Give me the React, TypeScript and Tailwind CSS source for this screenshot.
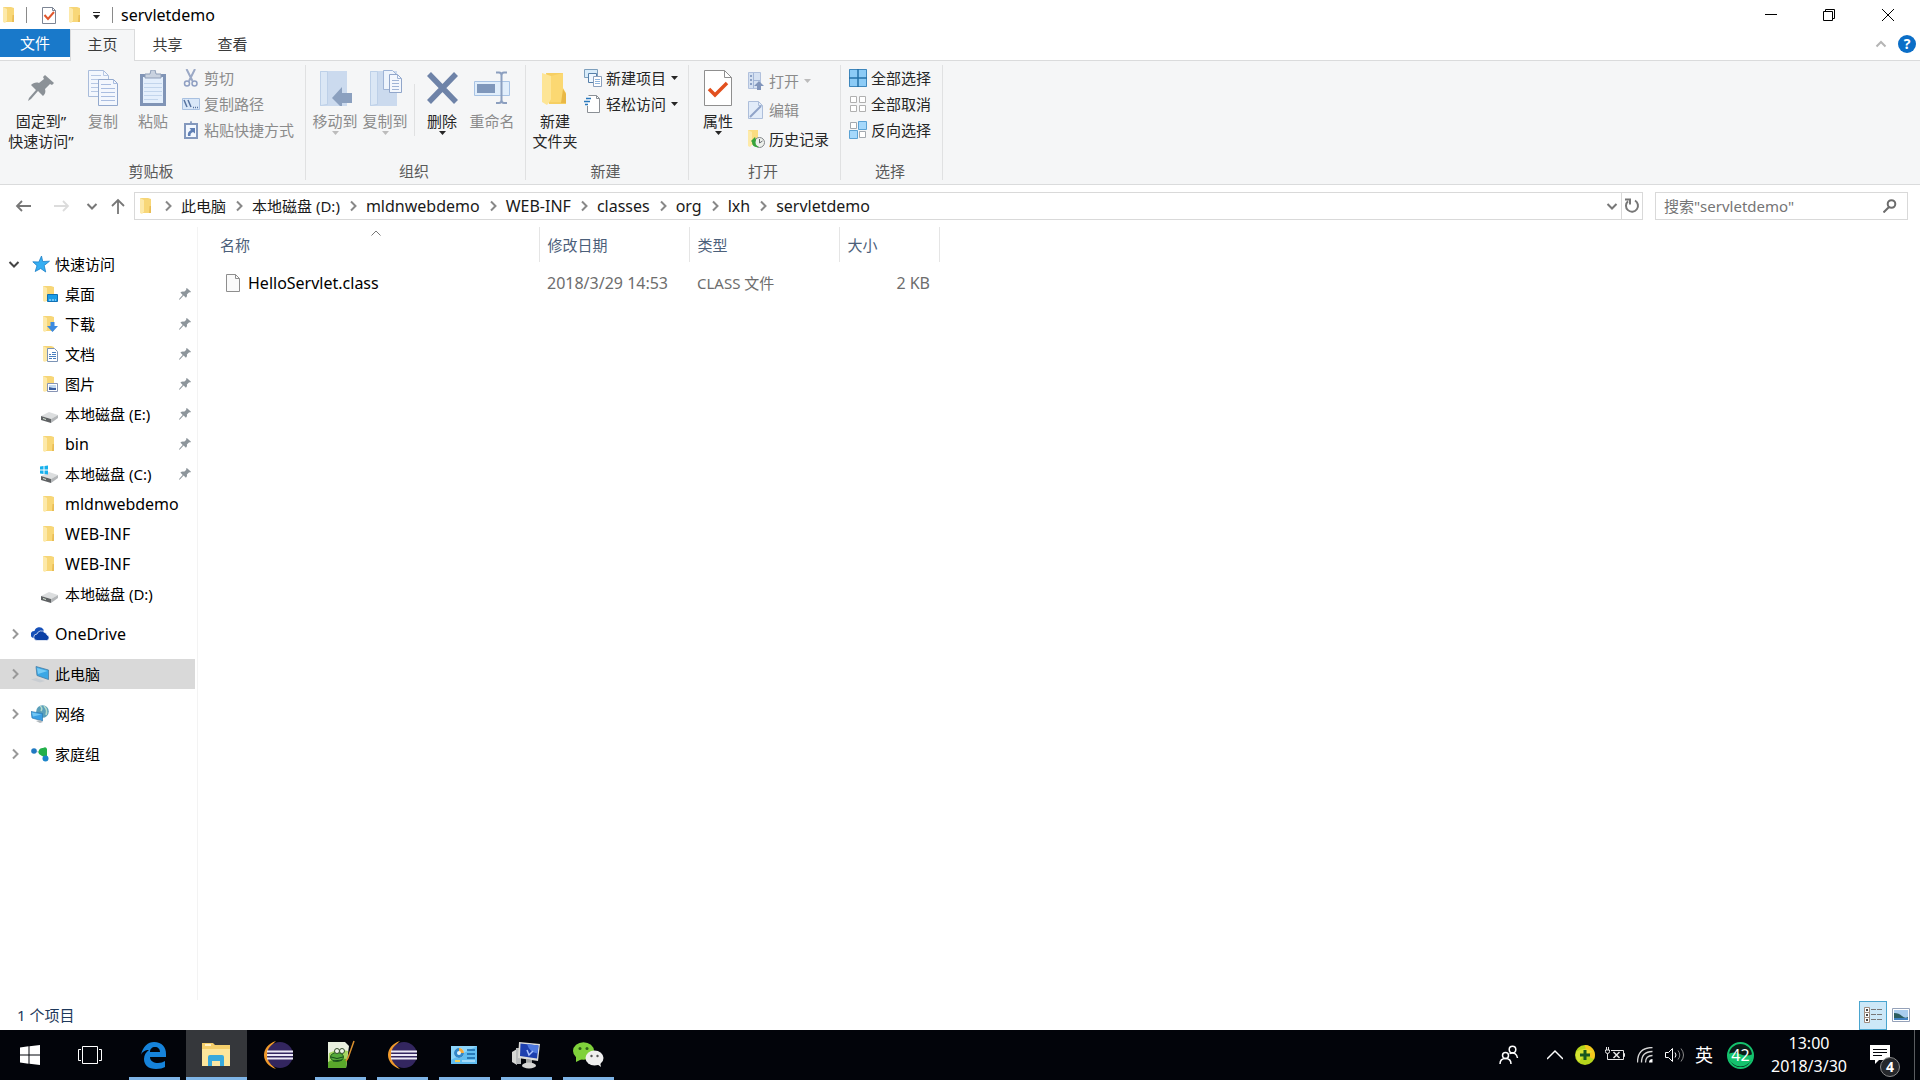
import { useState } from "react"
import type { ReactNode } from "react"
import { clsx } from "clsx"

const quickAccess = [
  { name: "桌面", icon: "desktop", pinned: true },
  { name: "下载", icon: "download", pinned: true },
  { name: "文档", icon: "document", pinned: true },
  { name: "图片", icon: "picture", pinned: true },
  { name: "本地磁盘 (E:)", icon: "drive", pinned: true },
  { name: "bin", icon: "folder", pinned: true, latin: true },
  { name: "本地磁盘 (C:)", icon: "system", pinned: true },
  { name: "mldnwebdemo", icon: "folder", latin: true },
  { name: "WEB-INF", icon: "folder", latin: true },
  { name: "WEB-INF", icon: "folder", latin: true },
  { name: "本地磁盘 (D:)", icon: "drive" },
]

const roots = [
  { name: "OneDrive", icon: "onedrive", latin: true },
  { name: "此电脑", icon: "pc", selected: true },
  { name: "网络", icon: "network" },
  { name: "家庭组", icon: "homegroup" },
]

const crumbs = [
  { name: "此电脑" },
  { name: "本地磁盘 (D:)" },
  { name: "mldnwebdemo", latin: true },
  { name: "WEB-INF", latin: true },
  { name: "classes", latin: true },
  { name: "org", latin: true },
  { name: "lxh", latin: true },
  { name: "servletdemo", latin: true },
]

const files = [
  { name: "HelloServlet.class", date: "2018/3/29 14:53", type: "CLASS 文件", size: "2 KB" },
]

function Chevron({ dir, className }: { dir: "up" | "down" | "right"; className?: string }) {
  const d = {
    up: "M1.5 8.5 6 4l4.5 4.5",
    down: "M1.5 4 6 8.500 10.500 4",
    right: "M4 1.500 8.500 6 4 10.500",
  }[dir]
  return (
    <svg className={clsx("w-3 h-3 shrink-0", className)} viewBox="0 0 12 12" fill="none" stroke="currentColor">
      <path d={d} />
    </svg>
  )
}

function Caret({ className }: { className?: string }) {
  return (
    <svg className={clsx("w-[7px] h-1 shrink-0", className)} viewBox="0 0 7 4" fill="currentColor">
      <path d="M0 0h7L3.500 4z" />
    </svg>
  )
}

function FolderShape() {
  return (
    <>
      <path d="M3 1h8l3 1v14H4z" fill="#f6d577" />
      <path d="M3 1l4 2v12l-2 2-2-1z" fill="#fde9a9" />
      <path d="M7 3l7-1v14H6l1-1z" fill="#f8d778" />
      <path d="M12.500 9h1.500v7h-2z" fill="#e9bd55" />
    </>
  )
}

function DriveShape() {
  return (
    <>
      <path d="M1 11l8-4 9 3-7 4z" fill="#dcdedf" />
      <path d="M1 11l10 3v4L1 15z" fill="#5f6264" />
      <path d="M11 14l7-4v3l-7 5z" fill="#b4b7b9" />
      <path d="M3 13.500l3 1" stroke="#d7e6d5" />
    </>
  )
}

function NavIcon({ kind }: { kind: string }) {
  return (
    <svg className="w-[18px] h-[18px] shrink-0" viewBox="0 0 18 18" fill="none">
      {["desktop", "download", "document", "picture", "folder"].includes(kind) && <FolderShape />}
      {kind === "desktop" && (
        <>
          <path d="M7.500 9.500h10v7h-10z" fill="#1a9be6" stroke="#0f6fb3" />
          <path d="M9 15h7" stroke="#c9ecff" strokeDasharray="2 1" />
        </>
      )}
      {kind === "download" && <path d="M10.500 7h4v4H18l-5.500 6L7 11h3.500z" fill="#3c8ae0" />}
      {kind === "document" && (
        <>
          <path d="M7.500 3.500h7l3 3v10h-10z" fill="#fff" stroke="#7b93b5" />
          <path d="M9 9.500h2m1-2h4m-4 2h4m-7 2h7m-7 2h3m1 0h3" stroke="#4a7fc0" />
        </>
      )}
      {kind === "picture" && (
        <>
          <path d="M7.500 8.500h10v8h-10z" fill="#fff" stroke="#8794b5" />
          <path d="M9 10h7v5H9z" fill="#c4d9f0" />
          <path d="M9 12l4 1h3v2H9z" fill="#3b5fa0" />
        </>
      )}
      {kind === "drive" && <DriveShape />}
      {kind === "system" && (
        <>
          <DriveShape />
          <path d="M0 1.500l3.500-.5v3.500H0zM4.500 1L8 .5v4H4.500zM0 5.500h3.500V9L0 8.500zM4.500 5.500H8v4L4.500 9z" fill="#17b0ec" />
        </>
      )}
      {kind === "star" && (
        <path
          d="M9.500 1l1.200 5.500 6.800-.3-5.300 4.300 1.500 6.500-5-3.500-5.500 3 1.800-5.800L.8 6.800l6 .2z"
          fill="#35aef2"
          stroke="#1c7fc7"
          strokeWidth=".8"
        />
      )}
      {kind === "onedrive" && (
        <>
          <path d="M3 13A3.500 3.500 0 0 1 3.500 6 5 5 0 0 1 12.500 4.500V8L5 14z" fill="#1650b8" />
          <path
            d="M6 15.500a3.200 3.200 0 0 1 0-6.500 4.300 4.300 0 0 1 7.500-1.500A3 3 0 0 1 16 10a2.800 2.800 0 0 1-.5 5.500z"
            fill="#0c41a6"
            stroke="#fff"
            strokeWidth=".7"
          />
        </>
      )}
      {kind === "pc" && (
        <>
          <path d="M5 1.500l12.500 3.500v9.500L6 10.500z" fill="#3ba7e5" stroke="#487da5" strokeWidth=".8" />
          <path d="M6 3l10.500 3L7 9z" fill="#76ccf6" />
          <path d="M0 14.500l5-1.500 9 3-5 1.500z" fill="#c8cdd2" />
        </>
      )}
      {kind === "network" && (
        <>
          <circle cx="11.500" cy="6.500" r="6.300" fill="#5a9fba" />
          <path d="M9 1q3 2 1 5m3-5q4 4 2 9" stroke="#b5dccb" strokeWidth="1.500" />
          <path d="M0 6.500l11.500 2V16L1 13z" fill="#3a9fe4" stroke="#2d79af" strokeWidth=".7" />
          <path d="M1 7.500l9.500 2L2 11.500z" fill="#72c7f5" />
          <path d="M5 16l4-1 3 2-3 1z" fill="#b1b8bd" />
        </>
      )}
      {kind === "homegroup" && (
        <>
          <path d="M3 6l9 2 2 7" stroke="#87a8c0" strokeWidth=".6" />
          <circle cx="3" cy="6" r="2.800" fill="#2079c2" />
          <path d="M8 9a4 4 0 0 1 4-6q3-2 4 1v9l-5-2z" fill="#23b04a" />
          <circle cx="14.500" cy="13.500" r="3" fill="#1b84c9" />
        </>
      )}
    </svg>
  )
}

function Pin({ className }: { className?: string }) {
  return (
    <svg className={className} viewBox="0 0 26 26" fill="currentColor">
      <path d="M17 0l9 8-2 2-2-1-5 5c1 3 0 5-2 7l-5-5-7 8-3 2 1-3 7-8-5-5c2-2 5-3 8-2l5-4-1-2z" />
    </svg>
  )
}

function BigIcon({ kind }: { kind: string }) {
  return (
    <svg className="w-9 h-9" viewBox="0 0 36 36" fill="none">
      {kind === "copy" && (
        <>
          <path d="M3.500.5h15l5 5v21h-20z" fill="#f3f7fd" stroke="#a9bcdb" />
          <path d="M18.500.5v5h5M6 5.500h10m-10 4h15m-15 4h15m-15 4h15m-15 4h15" stroke="#b7c8e4" />
          <path d="M13.500 9.500h15l4 4v22h-19z" fill="#f3f7fd" stroke="#93a9cd" />
          <path d="M28.500 9.500v4h4M16 14.500h10m-10 4h14m-14 4h14m-14 4h14m-14 4h14" stroke="#a9bde0" />
        </>
      )}
      {kind === "paste" && (
        <>
          <path d="M5 4h26v32H5z" fill="#8094b6" />
          <path d="M8 7h20v26H8z" fill="#e4effc" />
          <path d="M9 13.500h18m-18 4h18m-18 4h18m-18 4h18m-18 4h14" stroke="#c2d5ec" />
          <path d="M10 8V4h5l1-4h4l1 4h5v4z" fill="#c9d2df" stroke="#8e9eb7" />
        </>
      )}
      {(kind === "moveTo" || kind === "copyTo") && (
        <>
          <path d="M3 1h27v35H3z" fill="#cbdaee" />
          <path d="M3.500 1.500h7v33l-7 1z" fill="#dbe7f5" stroke="#bdd0e8" />
        </>
      )}
      {kind === "moveTo" && <path d="M15 28L25 17v6h10v10H25v5z" fill="#8ba0bf" />}
      {kind === "copyTo" && (
        <>
          <path d="M16.500.5h9l4 4v15h-13z" fill="#eef4fc" stroke="#9fb4d6" />
          <path d="M22.500 4.500h8l4 4v14h-12z" fill="#f3f7fd" stroke="#91a6ca" />
          <path d="M30.500 4.500v4h4M25 10.500h7m-7 3h7m-7 3h7m-7 3h7" stroke="#9fb4d6" />
        </>
      )}
      {kind === "delete" && <path d="M5 4l27 28M32 4L5 32" stroke="#6e83a8" strokeWidth="5.500" />}
      {kind === "rename" && (
        <>
          <path d="M.5 11.500h35v14H.5z" fill="#e1eefb" stroke="#a8c3e4" />
          <path d="M3 14h18v9H3z" fill="#7f97bb" />
          <path d="M22 2.500h3q2.500 0 2.500 3V30q0 3-2.500 3h-3M33 2.500h-3q-2.500 0-2.500 3V30q0 3 2.500 3h3" stroke="#8c9fbf" strokeWidth="2" />
        </>
      )}
      {kind === "newFolder" && (
        <>
          <path d="M9 3h17v16l3 5v10H12z" fill="#f6cf62" />
          <path d="M5 3l9 3v24l-4 5-5-3z" fill="#fde596" />
          <path d="M14 6l12-3v15l3 5v9H13l1-3z" fill="#fbd872" />
          <path d="M26 19l3 5v9h-5z" fill="#e9b846" />
        </>
      )}
      {kind === "properties" && (
        <>
          <path d="M4.500.5h20l7 7v28h-27z" fill="#fff" stroke="#8f8f8f" />
          <path d="M24.500.5v7h7" stroke="#8f8f8f" />
          <path d="M9 19l6 6 12-12" stroke="#e2501e" strokeWidth="3.500" />
        </>
      )}
    </svg>
  )
}

function SmallIcon({ kind }: { kind: string }) {
  return (
    <svg className="w-[18px] h-[18px] shrink-0" viewBox="0 0 18 18" fill="none">
      {kind === "cut" && (
        <>
          <path d="M4.500 0l6 12M13 0L7 12" stroke="#9ba9c6" strokeWidth="2" />
          <circle cx="5" cy="14.500" r="2.500" stroke="#8f9fc2" strokeWidth="1.500" />
          <circle cx="12.500" cy="14.500" r="2.500" stroke="#8f9fc2" strokeWidth="1.500" />
        </>
      )}
      {kind === "path" && (
        <>
          <path d="M.5 3.500h17v11H.5z" fill="#d9e7f8" stroke="#a8c0e0" />
          <path d="M2 5l3 7M6 5l3 7M11 12.500h1m1 0h1m1 0h1" stroke="#57739f" strokeWidth="1.500" />
        </>
      )}
      {kind === "shortcut" && (
        <>
          <path d="M3 3h12v14H3z" fill="#f3f8ff" stroke="#8398bd" strokeWidth="2" />
          <path d="M6 4V2h2l.5-2h1l.5 2h2v2z" fill="#8398bd" />
          <path d="M6 15q-1-4 3-6L7.500 7H13v5.500L11 11q-3 1-2.500 4z" fill="#6080b5" />
        </>
      )}
      {kind === "newItem" && (
        <>
          <path d="M.5.5h13v8H.5z" fill="#d8ecfa" stroke="#7d9fbd" />
          <path d="M4.500 4.500h8v9h-8z" fill="#eef7ff" stroke="#557fa9" />
          <path d="M9.500 7.500h8v10h-8z" fill="#fff" stroke="#8ba0bc" />
          <path d="M11 10.500h5m-5 2h5m-5 2h5" stroke="#8fb5dd" />
        </>
      )}
      {kind === "easyAccess" && (
        <>
          <path d="M3.500 11v6.500h12V3.500l-3-3h-8" fill="#fff" stroke="#8a8f95" />
          <path d="M12.500.5v3h3" stroke="#8a8f95" />
          <path d="M2 3.500h5M0 6.500h6M1 9.500h3" stroke="#2878bd" strokeWidth="1.500" />
        </>
      )}
      {kind === "open" && (
        <>
          <path d="M1.500.5h12v16h-12z" fill="#d5e1f2" stroke="#b1c1dd" />
          <path d="M3 3h2v2H3zm0 4h2v2H3zm0 4h2v2H3z" fill="#8ba1c5" />
          <path d="M6.500 1v15M7 8.500h6" stroke="#a3b6d6" />
          <path d="M12 9l5 5h-3v4h-4v-4H7z" fill="#8195bb" />
        </>
      )}
      {kind === "edit" && (
        <>
          <path d="M1.500.5h10l4 4v13h-14z" fill="#e2ecf9" stroke="#adbeda" />
          <path d="M11.500.5v4h4" stroke="#adbeda" />
          <path d="M3 16L14 5" stroke="#8fa3c8" strokeWidth="2" />
        </>
      )}
      {kind === "history" && (
        <>
          <path d="M1 0h10v15H1z" fill="#fbdc80" />
          <path d="M1 0l4 2v13l-2 2-2-1z" fill="#fdeaa9" />
          <circle cx="12.500" cy="12.500" r="5" fill="#eef1ec" stroke="#82868a" />
          <path d="M12.500 9v4l3-2" stroke="#666c72" />
          <path d="M4 11l4-4 1 3q-2 5 3 7-7 1-7-5z" fill="#37a43d" />
        </>
      )}
      {kind === "selectAll" && (
        <>
          <path d="M0 0h18v18H0z" fill="#8ccbf6" />
          <path d="M.5.5h17v17H.5z" stroke="#3f87bc" />
          <path d="M9 0v18M0 9h18" stroke="#2472a8" strokeWidth="1.500" />
        </>
      )}
      {kind === "selectNone" && (
        <path d="M1.500 1.500h6v6h-6zM10.500 1.500h6v6h-6zM1.500 10.500h6v6h-6zM10.500 10.500h6v6h-6z" fill="#fff" stroke="#b0b0b0" />
      )}
      {kind === "selectInvert" && (
        <>
          <path d="M1.500 1.500h6v6h-6zM10.500 10.500h6v6h-6z" fill="#fff" stroke="#a3a9af" />
          <path d="M9.500.5h8v8h-8zM.5 9.500h8v8h-8z" fill="#a5d8fb" stroke="#5ba2d4" />
        </>
      )}
    </svg>
  )
}

function BigButton({ icon, lines, disabled, caret, className }: { icon: ReactNode; lines: string[]; disabled?: boolean; caret?: boolean; className?: string }) {
  return (
    <button
      disabled={disabled}
      className={clsx("flex flex-col items-center shrink-0 pt-0.5", disabled ? "text-[#8b8b8b]" : "text-[#262626]", className)}
    >
      <span className="h-9 flex items-center">{icon}</span>
      <span className="mt-[5px] leading-5 whitespace-nowrap">
        {lines.map((line) => (
          <span key={line} className="block">{line}</span>
        ))}
      </span>
      {caret && <Caret className={disabled ? "text-[#bcbcbc]" : undefined} />}
    </button>
  )
}

function SmallButton({ icon, label, disabled, caret }: { icon: string; label: string; disabled?: boolean; caret?: boolean }) {
  return (
    <button
      disabled={disabled}
      className={clsx("flex items-center gap-1 h-5 leading-5 whitespace-nowrap", disabled ? "text-[#8b8b8b]" : "text-[#262626]")}
    >
      <SmallIcon kind={icon} />
      {label}
      {caret && <Caret className={clsx("ml-px", disabled && "text-[#bcbcbc]")} />}
    </button>
  )
}

function Group({ label, className, children }: { label: string; className?: string; children: ReactNode }) {
  return (
    <section className={clsx("relative flex flex-col justify-between pt-[7px] pb-[3px] shrink-0", className)}>
      <div className="flex items-start pl-1">{children}</div>
      <h2 className="pr-1 text-center leading-5 text-[#5a5a5a]">{label}</h2>
      <span className="absolute right-0 top-1 bottom-1 w-px bg-[#e0e1e2]" />
    </section>
  )
}

function Ribbon() {
  return (
    <div className="flex h-[124px] bg-[#f5f6f7] border-b border-[#dadbdc] overflow-hidden">
      <Group label="剪贴板" className="w-[306px]">
        <BigButton icon={<Pin className="w-[26px] h-[26px] text-[#8b9197]" />} lines={["固定到”", "快速访问”"]} className="w-[74px]" />
        <BigButton icon={<BigIcon kind="copy" />} lines={["复制"]} disabled className="w-[50px]" />
        <BigButton icon={<BigIcon kind="paste" />} lines={["粘贴"]} disabled className="w-[50px]" />
        <div className="flex flex-col gap-1.5 ml-1">
          <SmallButton icon="cut" label="剪切" disabled />
          <SmallButton icon="path" label="复制路径" disabled />
          <SmallButton icon="shortcut" label="粘贴快捷方式" disabled />
        </div>
      </Group>
      <Group label="组织" className="w-[220px]">
        <BigButton icon={<BigIcon kind="moveTo" />} lines={["移动到"]} disabled caret className="w-[50px]" />
        <BigButton icon={<BigIcon kind="copyTo" />} lines={["复制到"]} disabled caret className="w-[50px]" />
        <span className="w-px h-[52px] mt-4 ml-1 bg-[#e0e1e2]" />
        <BigButton icon={<BigIcon kind="delete" />} lines={["删除"]} caret className="w-[54px]" />
        <BigButton icon={<BigIcon kind="rename" />} lines={["重命名"]} disabled className="w-[46px]" />
      </Group>
      <Group label="新建" className="w-[163px]">
        <BigButton icon={<BigIcon kind="newFolder" />} lines={["新建", "文件夹"]} className="w-[50px]" />
        <div className="flex flex-col gap-1.5 ml-1">
          <SmallButton icon="newItem" label="新建项目" caret />
          <SmallButton icon="easyAccess" label="轻松访问" caret />
        </div>
      </Group>
      <Group label="打开" className="w-[152px]">
        <BigButton icon={<BigIcon kind="properties" />} lines={["属性"]} caret className="w-[50px]" />
        <div className="flex flex-col gap-[9px] ml-1 pt-[3px]">
          <SmallButton icon="open" label="打开" disabled caret />
          <SmallButton icon="edit" label="编辑" disabled />
          <SmallButton icon="history" label="历史记录" />
        </div>
      </Group>
      <Group label="选择" className="w-[102px]">
        <div className="flex flex-col gap-1.5 ml-1">
          <SmallButton icon="selectAll" label="全部选择" />
          <SmallButton icon="selectNone" label="全部取消" />
          <SmallButton icon="selectInvert" label="反向选择" />
        </div>
      </Group>
    </div>
  )
}

function TitleBar() {
  return (
    <header className="flex items-center h-[29px]">
      <svg className="w-[18px] h-[18px]" viewBox="0 0 18 18"><FolderShape /></svg>
      <span className="w-px h-4 ml-2 bg-[#8a8a8a]" />
      <button aria-label="属性" className="ml-3.5">
        <svg className="w-[18px] h-[18px]" viewBox="0 0 18 18" fill="none">
          <path d="M1.500 1.500h10l3 3v13h-13z" fill="#fff" stroke="#7d8594" />
          <path d="M11.500 1.500v3h3" stroke="#7d8594" />
          <path d="M3.500 9l3.500 4 6-7" stroke="#e0562d" strokeWidth="2" />
        </svg>
      </button>
      <button aria-label="新建文件夹" className="ml-[7px]">
        <svg className="w-[18px] h-[18px]" viewBox="0 0 18 18"><FolderShape /></svg>
      </button>
      <button aria-label="自定义快速访问工具栏" className="ml-[9px] mt-0.5 flex flex-col items-center gap-0.5 text-[#222]">
        <span className="w-[7px] h-px bg-current" />
        <Caret />
      </button>
      <span className="w-px h-4 ml-3 bg-[#8a8a8a]" />
      <h1 className="ml-2 text-base leading-5 text-black">servletdemo</h1>
      <div className="ml-auto mr-0.5 flex self-stretch">
        <button aria-label="最小化" className="w-[58px] flex items-center justify-center">
          <span className="w-3 h-px bg-black" />
        </button>
        <button aria-label="向下还原" className="w-[58px] flex items-center justify-center">
          <svg className="w-3 h-3" viewBox="0 0 12 12" fill="none" stroke="#000">
            <path d="M.5 2.500h9v9h-9zM2.500 2.500v-2h9v9h-2" />
          </svg>
        </button>
        <button aria-label="关闭" className="w-[60px] flex items-center justify-center">
          <svg className="w-3 h-3" viewBox="0 0 12 12" fill="none" stroke="#000">
            <path d="M0 0l12 12M12 0L0 12" />
          </svg>
        </button>
      </div>
    </header>
  )
}

function Tabs() {
  const [active, setActive] = useState("主页")
  return (
    <div className="flex h-8 border-b border-[#dadbdc] text-[#3a3a3a]">
      <button className="w-[70px] h-7 bg-[#1979ca] text-white">文件</button>
      {["主页", "共享", "查看"].map((tab) => (
        <button
          key={tab}
          onClick={() => setActive(tab)}
          className={clsx("w-[65px] h-8 pb-1 border-x border-t", active === tab ? "bg-[#f5f6f7] border-[#dadbdc]" : "border-transparent")}
        >
          {tab}
        </button>
      ))}
      <div className="ml-auto flex items-center gap-[11px] pr-1 pb-0.5">
        <button aria-label="最小化功能区"><Chevron dir="up" className="stroke-2 text-[#b5b5b5]" /></button>
        <button aria-label="帮助" className="w-[18px] h-[18px] rounded-full bg-[#0b6ec7] text-white text-sm leading-[18px] font-bold">?</button>
      </div>
    </div>
  )
}

function AddressRow() {
  return (
    <div className="flex items-center h-[42px] pr-3 text-[#1a1a1a]">
      <button aria-label="后退" className="ml-[15px]">
        <svg className="w-4 h-4" viewBox="0 0 16 16" fill="none" stroke="#777" strokeWidth="1.800"><path d="M16 8H2m5-5L2 8l5 5" /></svg>
      </button>
      <button aria-label="前进" disabled className="ml-[23px]">
        <svg className="w-4 h-4" viewBox="0 0 16 16" fill="none" stroke="#dcdcdc" strokeWidth="1.800"><path d="M0 8h14M9 3l5 5-5 5" /></svg>
      </button>
      <button aria-label="最近浏览的位置" className="ml-4 text-[#777]"><Chevron dir="down" className="w-2.5 h-2.5 stroke-2" /></button>
      <button aria-label="上移" className="ml-3">
        <svg className="w-4 h-4" viewBox="0 0 16 16" fill="none" stroke="#777" strokeWidth="1.800"><path d="M8 16V2M2 8l6-6 6 6" /></svg>
      </button>
      <nav aria-label="地址" className="ml-2 flex-1 flex items-center h-7 border border-[#d9d9d9] min-w-0">
        <svg className="w-[18px] h-[18px] ml-0.5 shrink-0" viewBox="0 0 18 18"><FolderShape /></svg>
        {crumbs.map((c) => (
          <span key={c.name} className="flex items-center whitespace-nowrap">
            <span className="w-[26px] flex justify-center"><Chevron dir="right" className="w-2.5 h-2.5 stroke-2 text-[#888]" /></span>
            <a href="#" className={c.latin ? "text-base leading-5" : "leading-5"}>{c.name}</a>
          </span>
        ))}
        <button aria-label="以前的位置" className="ml-auto mr-[3px] text-[#777]"><Chevron dir="down" className="stroke-2" /></button>
        <button aria-label="刷新" className="w-[21px] self-stretch flex items-center justify-center border-l border-[#d9d9d9]">
          <svg className="w-4 h-4" viewBox="0 0 16 16" fill="none" stroke="#777" strokeWidth="2">
            <path d="M11 2.500A6 6 0 1 1 4 3.200M1 1.500h5v5" />
          </svg>
        </button>
      </nav>
      <form className="ml-3 w-[253px] h-7 flex items-center border border-[#d9d9d9] pl-2 pr-2.5" onSubmit={(e) => e.preventDefault()}>
        <input
          id="search"
          type="text"
          placeholder='搜索"servletdemo"'
          className="flex-1 min-w-0 self-stretch leading-6 bg-transparent outline-none placeholder:text-[#757575]"
        />
        <label htmlFor="search" aria-label="搜索">
          <svg className="w-3.5 h-3.5" viewBox="0 0 14 14" fill="none" stroke="#6c6c6c" strokeWidth="2">
            <circle cx="8.500" cy="5" r="3.800" />
            <path d="M6 8l-5.500 5.500" />
          </svg>
        </label>
      </form>
    </div>
  )
}

function SideNav() {
  return (
    <nav aria-label="导航窗格" className="w-[198px] shrink-0 border-r border-[#f3f3f3] pt-[22px] text-black">
      <a href="#" className="flex items-center h-[30px] pl-2 gap-3">
        <Chevron dir="down" className="stroke-2 text-[#444]" />
        <span className="flex items-center gap-[5px]"><NavIcon kind="star" />快速访问</span>
      </a>
      <ul>
        {quickAccess.map((item, i) => (
          <li key={i}>
            <a href="#" className="flex items-center h-[30px] pl-10 pr-1.5 gap-[7px] whitespace-nowrap">
              <NavIcon kind={item.icon} />
              <span className={item.latin ? "text-base" : undefined}>{item.name}</span>
              {item.pinned && <Pin className="w-3 h-3 ml-auto text-[#8d959b]" />}
            </a>
          </li>
        ))}
      </ul>
      <ul className="mt-2.5 flex flex-col gap-2.5">
        {roots.map((item) => (
          <li key={item.name}>
            <a
              href="#"
              className={clsx("flex items-center h-[30px] mr-0.5 pl-[9px] gap-2.5", item.selected && "bg-[#d9d9d9]")}
            >
              <Chevron dir="right" className="stroke-2 text-[#999]" />
              <span className="flex items-center gap-1.5">
                <NavIcon kind={item.icon} />
                <span className={item.latin ? "text-base" : undefined}>{item.name}</span>
              </span>
            </a>
          </li>
        ))}
      </ul>
    </nav>
  )
}

function FileList() {
  return (
    <main className="flex-1 min-w-0">
      <table className="table-fixed w-[741px] border-collapse text-left">
        <colgroup>
          <col className="w-[341px]" />
          <col className="w-[150px]" />
          <col className="w-[150px]" />
          <col className="w-[100px]" />
        </colgroup>
        <thead className="text-[#4c607a]">
          <tr className="h-[35px]">
            {["名称", "修改日期", "类型", "大小"].map((h, i) => (
              <th key={h} className={clsx("relative p-0 font-normal border-r border-[#e5e5e5]", i === 0 ? "pl-[22px]" : "pl-2")}>
                <button>{h}</button>
                {i === 0 && <Chevron dir="up" className="absolute top-0 left-[172px] text-[#777]" />}
              </th>
            ))}
          </tr>
        </thead>
        <tbody className="text-[#6d6d6d]">
          {files.map((f) => (
            <tr key={f.name} className="h-[41px]">
              <td className="p-0 pl-7 text-black">
                <a href="#" className="flex items-center gap-2 text-base leading-5">
                  <svg className="w-3.5 h-[18px]" viewBox="0 0 14 18" fill="none" stroke="#8e8e8e">
                    <path d="M.5.5h9l4 4v13H.5z" fill="#fafafa" />
                    <path d="M9.500.5v4h4" />
                  </svg>
                  {f.name}
                </a>
              </td>
              <td className="p-0 pl-2 text-base">{f.date}</td>
              <td className="p-0 pl-2">{f.type}</td>
              <td className="p-0 pr-[9px] text-right text-base">{f.size}</td>
            </tr>
          ))}
        </tbody>
      </table>
    </main>
  )
}

function StatusBar() {
  return (
    <footer className="flex items-center h-[30px] pl-[17px] pr-2.5 text-[#1e395b]">
      <span>1 个项目</span>
      <div className="ml-auto flex items-center gap-[5px]">
        <button aria-label="详细信息" className="w-7 h-[29px] flex items-center justify-center bg-[#cce8f8] border border-[#4aa5cf]">
          <svg className="w-[18px] h-4" viewBox="0 0 18 16" fill="none">
            <path d="M.5.500h5v5h-5zM.5 5.500h5v5h-5zM.5 10.500h5v5h-5z" fill="#fff" stroke="#a08d80" />
            <path d="M2 3h2M2 8h2M2 13h2" stroke="#444" strokeWidth="2" />
            <path d="M7 2.500h5m1 0h5M7 7.500h5m1 0h5M7 12.500h5m1 0h5" stroke="#777" />
          </svg>
        </button>
        <button aria-label="大缩略图">
          <svg className="w-[18px] h-3.5" viewBox="0 0 18 14" fill="none">
            <path d="M.5.500h17v13H.5z" fill="#fff" stroke="#94a1b8" />
            <path d="M2 2h14v10H2z" fill="#a9cdee" />
            <path d="M2 5q5 0 8 3t6 1v3H2z" fill="#2c5d5f" />
            <path d="M2 10h14v2H2z" fill="#3f81c0" />
          </svg>
        </button>
      </div>
    </footer>
  )
}

function TaskIcon({ kind }: { kind: string }) {
  return (
    <svg className="w-8 h-8" viewBox="0 0 32 32" fill="none">
      {kind === "edge" && (
        <path
          d="M3 16C5 7 10 3 16 3c8 0 12 5 12 12v3H12c0 4 4 6 8 6 3 0 5-1 7-2v6c-2 1-5 2-9 2C10 30 6 26 6 20c0-4 2-7 5-9-4 0-7 2-8 5zm9-3h10c0-3-2-5-5-5s-5 2-5 5z"
          fill="#1683da"
          fillRule="evenodd"
        />
      )}
      {kind === "explorer" && (
        <>
          <path d="M2 4h11l2 2h15v21H2z" fill="#f4ce6b" />
          <path d="M2 10h28v17H2z" fill="#fde69b" />
          <path d="M8 27v-9q0-2 2-2h12q2 0 2 2v9h-4v-5h-8v5z" fill="#38a9dc" />
          <path d="M12 22h8v5h-8z" fill="#fce7a3" />
          <path d="M5 6h6" stroke="#fff1c7" strokeWidth="2" />
        </>
      )}
      {kind === "eclipse" && (
        <>
          <path d="M14 2C-2 7-2 25 14 30 5 23 5 9 14 2z" fill="#f09a2c" />
          <circle cx="18" cy="16" r="13" fill="#33265f" />
          <path d="M5 12.500h26M5 16h26M5 19.500h26" stroke="#eceaf6" strokeWidth="2" />
        </>
      )}
      {kind === "notepad" && (
        <>
          <path d="M4 3h17l4 4-3 22H4z" fill="#e8efdf" />
          <path d="M5 14q9-5 19-2l-2 17H4z" fill="#a5d65f" />
          <path d="M4 23q9-5 19-3l-1 9H4z" fill="#5aa82b" />
          <ellipse cx="13" cy="18" rx="6.500" ry="4.500" fill="#53a83a" stroke="#1e5b1b" />
          <circle cx="13" cy="12" r="2.500" fill="#eef3e8" stroke="#34502b" />
          <circle cx="18" cy="12" r="2.500" fill="#eef3e8" stroke="#34502b" />
          <path d="M7 18q6 3 12 0M9 22l9-1" stroke="#18491a" />
          <path d="M30 2l-6 17-2 3" stroke="#d9902e" strokeWidth="1.500" />
        </>
      )}
      {kind === "panel" && (
        <>
          <path d="M3 7h26v18H3z" fill="#62bdf0" />
          <path d="M3 7h26L3 21z" fill="#8dd5fa" />
          <circle cx="11" cy="14" r="5" fill="#f3f8fb" />
          <path d="M11 9a5 5 0 1 0 5 5h-5z" fill="#3187c9" />
          <path d="M11 9a5 5 0 0 1 5 5h-5z" fill="#f3a93b" />
          <circle cx="11" cy="14" r="2" fill="#dff2fc" />
          <path d="M19 11h8m-8 4h8m-8 4h8" stroke="#1764a5" strokeWidth="1.500" />
          <path d="M7 22h5" stroke="#f3d25b" strokeWidth="2" />
          <path d="M14 22h13" stroke="#e6f7ff" />
        </>
      )}
      {kind === "desktop" && (
        <>
          <path d="M2 13l5-3v16l-5-3z" fill="#d6d7d5" />
          <path d="M6 9h5v16H6z" fill="#b9bcbd" />
          <path d="M16 20l6 1v5h-6z" fill="#a1a3a2" />
          <ellipse cx="19" cy="26.500" rx="7" ry="3" fill="#d6d6d4" />
          <path d="M9 3l21 2-2 17-20-3z" fill="#dcdcd9" />
          <path d="M10.500 4.500l18 2-1.500 13-17-2.500z" fill="#1d3fae" />
          <path d="M17 5l11.500 1.500-1 8q-8-1-10.500-9.500z" fill="#4f79de" />
          <path d="M17 11l2 5 4-4" stroke="#a9c2ff" strokeWidth="1.500" />
        </>
      )}
      {kind === "wechat" && (
        <>
          <ellipse cx="11.500" cy="12" rx="10.500" ry="8.800" fill="#7fd13b" />
          <path d="M4 17l0 6 6-3z" fill="#7fd13b" />
          <circle cx="8" cy="9.500" r="1.500" fill="#2f5f17" />
          <circle cx="15" cy="9.500" r="1.500" fill="#2f5f17" />
          <ellipse cx="22.500" cy="19" rx="9" ry="7.500" fill="#efefef" />
          <path d="M25 25l4 3-1-5z" fill="#efefef" />
          <circle cx="19.500" cy="17" r="1.200" fill="#555" />
          <circle cx="25.500" cy="17" r="1.200" fill="#555" />
        </>
      )}
    </svg>
  )
}

const tasks = [
  { kind: "edge", label: "Microsoft Edge", open: true },
  { kind: "explorer", label: "文件资源管理器", open: true, active: true },
  { kind: "eclipse", label: "Eclipse" },
  { kind: "notepad", label: "Notepad++", open: true },
  { kind: "eclipse", label: "Eclipse", open: true },
  { kind: "panel", label: "控制面板", open: true },
  { kind: "desktop", label: "远程桌面", open: true },
  { kind: "wechat", label: "微信", open: true },
]

function Taskbar() {
  return (
    <div className="flex h-[50px] bg-[#02040a] text-white shrink-0">
      <button aria-label="开始" className="w-[60px] flex items-center justify-center">
        <svg className="w-5 h-5" viewBox="0 0 20 20" fill="#fff">
          <path d="M0 2.500l8.500-1.200v8.200H0zM9.500 1.200L20 0v9.500H9.500zM0 10.500h8.500v8.200L0 17.500zM9.500 10.500H20V20L9.500 18.800z" />
        </svg>
      </button>
      <button aria-label="任务视图" className="w-[60px] mr-1 flex items-center justify-center">
        <svg className="w-6 h-[18px]" viewBox="0 0 24 18" fill="none" stroke="#fff">
          <path d="M4.500.500h15v17h-15zM3 3.500H.5v11H3M21 3.500h2.500v11H21" />
        </svg>
      </button>
      {tasks.map((t, i) => (
        <button
          key={i}
          aria-label={t.label}
          className={clsx("relative w-[61px] mr-px pr-0.5 flex items-center justify-center", t.active && "bg-[#35373b]")}
        >
          <TaskIcon kind={t.kind} />
          {t.open && <span className={clsx("absolute bottom-0 h-[3px] bg-[#7eb4e6]", t.active ? "inset-x-0" : "inset-x-[5px]")} />}
        </button>
      ))}

      <div className="ml-auto flex items-center pr-[5px]">
        <button aria-label="人脉" className="mr-7">
          <svg className="w-5 h-5" viewBox="0 0 20 20" fill="none" stroke="#fff" strokeWidth="1.500">
            <circle cx="6.500" cy="10.500" r="3" />
            <path d="M1 19q0-5.500 5.500-5.500T12 19" />
            <circle cx="13.500" cy="4.500" r="3.300" />
            <path d="M10.500 8.500q7-2 8 4.500" />
          </svg>
        </button>
        <button aria-label="显示隐藏的图标" className="mr-3">
          <svg className="w-4 h-4" viewBox="0 0 16 16" fill="none" stroke="#fff" strokeWidth="1.500"><path d="M0 12l8-8 8 8" /></svg>
        </button>
        <svg className="w-5 h-5 mr-2.5" viewBox="0 0 20 20">
          <circle cx="10" cy="10" r="10" fill="#b5d51c" />
          <path d="M10 0a10 10 0 0 1 9 14q-5-1-8-7z" fill="#f5c81d" />
          <path d="M1 7q8-6 17 0-9 1-14 10Q0 13 1 7z" fill="#e2ea3e" opacity=".7" />
          <path d="M8.500 5h3v3.500H15v3h-3.500V15h-3v-3.500H5v-3h3.500z" fill="#17571f" />
        </svg>
        <svg className="w-5 h-4 mr-3" viewBox="0 0 20 16" fill="none" stroke="#e6e6e6">
          <path d="M6 3.500h12.500v9H5M18.500 6.500h1v3h-1M1.500 0v3m2-3v3M.5 3v1.500q0 2 2 2t2-2V3zM2.500 6.500v6h3" />
          <path d="M8.500 5l6 6m0-6l-6 6" strokeWidth="1.500" />
        </svg>
        <svg className="w-4 h-4 mr-3" viewBox="0 0 16 16" fill="none" stroke="#d5d5d5">
          <path d="M.5 15.500Q.5.500 15.500.500M4.500 15.500Q4.500 4.500 15.500 4.500M8.500 15.500q0-7 7-7" strokeWidth="1.300" />
          <path d="M12 15.500q0-3.500 3.500-3.500v3.500z" fill="#fff" stroke="none" />
        </svg>
        <svg className="w-5 h-4 mr-2.5" viewBox="0 0 20 16" fill="none" stroke="#fff">
          <path d="M.5 5.500h3l4-4v13l-4-4h-3z" />
          <path d="M10 5.500q2 2.500 0 5" />
          <path d="M13 3.500q3.500 4.500 0 9M16 1.500q5 6.500 0 13" stroke="#8a8a8a" />
        </svg>
        <button className="text-lg leading-6">英</button>
        <button className="relative w-[27px] h-[27px] ml-3.5 text-base">
          <svg className="absolute inset-0 w-full h-full" viewBox="0 0 27 27" fill="none">
            <circle cx="13.500" cy="13.500" r="12.500" fill="#0a1c17" stroke="#14c26d" strokeWidth="2" />
            <path d="M1 12q6-3 12 0t13 0a12.500 12.500 0 0 1-25 0z" fill="#14c26d" />
          </svg>
          <span className="relative">42</span>
        </button>
        <button className="w-[76px] ml-[17px] text-center text-base leading-[23px] whitespace-nowrap">
          <span className="block">13:00</span>
          <span className="block">2018/3/30</span>
        </button>
        <button aria-label="操作中心" className="relative ml-[23px] w-8 h-9">
          <svg className="w-5 h-5 absolute left-0 top-2" viewBox="0 0 20 20">
            <path d="M0 0h20v15H9l-4 4v-4H0z" fill="#fff" />
            <path d="M3 4.500h14M3 7.500h14M3 10.500h9" stroke="#02040a" />
          </svg>
          <span className="absolute right-0.5 -bottom-1 w-5 h-5 rounded-full border border-[#8a8a8a] bg-[#26282c] text-sm leading-[18px] font-bold">4</span>
        </button>
        <span className="ml-3 w-px h-[50px] bg-[#5a5c60]" />
      </div>
    </div>
  )
}

export default function App() {
  return (
    <div className="flex flex-col min-h-screen bg-white text-[15px] leading-5 font-['Noto_Sans','Noto_Sans_CJK_SC',sans-serif]">
      <TitleBar />
      <Tabs />
      <Ribbon />
      <AddressRow />
      <div className="flex flex-1">
        <SideNav />
        <FileList />
      </div>
      <StatusBar />
      <Taskbar />
    </div>
  )
}
